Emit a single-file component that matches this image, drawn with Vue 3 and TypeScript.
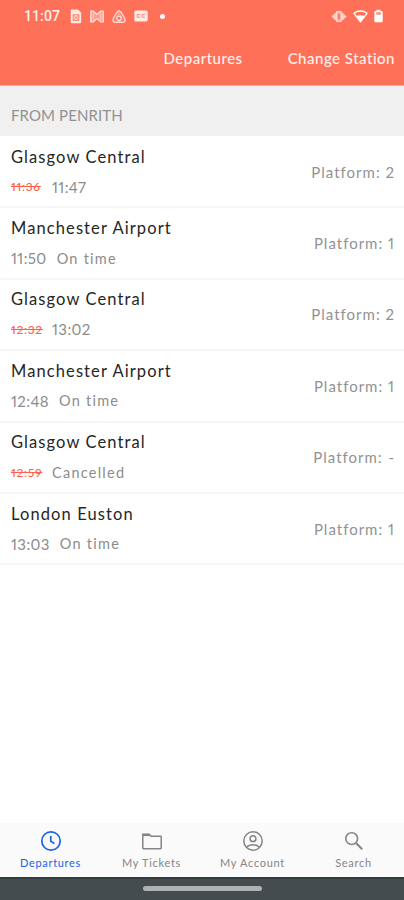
<script setup lang="ts">
interface Departure {
  id: number
  destination: string
  scheduled: string
  status: string
  delayed: boolean
  platform: string
}

const departures: Departure[] = [
  { id: 1, destination: 'Glasgow Central', scheduled: '11:36', status: '11:47', delayed: true, platform: '2' },
  { id: 2, destination: 'Manchester Airport', scheduled: '11:50', status: 'On time', delayed: false, platform: '1' },
  { id: 3, destination: 'Glasgow Central', scheduled: '12:32', status: '13:02', delayed: true, platform: '2' },
  { id: 4, destination: 'Manchester Airport', scheduled: '12:48', status: 'On time', delayed: false, platform: '1' },
  { id: 5, destination: 'Glasgow Central', scheduled: '12:59', status: 'Cancelled', delayed: true, platform: '-' },
  { id: 6, destination: 'London Euston', scheduled: '13:03', status: 'On time', delayed: false, platform: '1' },
]

const tabs = [
  { icon: 'clock', label: 'Departures', active: true },
  { icon: 'folder', label: 'My Tickets', active: false },
  { icon: 'account', label: 'My Account', active: false },
  { icon: 'search', label: 'Search', active: false },
]
</script>

<template>
  <div class="screen">
    <header class="top">
      <div class="status">
        <span class="device-time">11:07</span>
        <svg width="12" height="15" viewBox="0 0 12 15">
          <path d="M1.500 .5H8L11.200 3.700V13a1.200 1.200 0 0 1-1.200 1.200H2A1.200 1.200 0 0 1 .8 13V1.200Z" fill="#ffe9e4" />
          <path d="M3.200 5.800h5.600v5.600H3.200ZM3.400 6l5.200 5.200M8.600 6l-5.200 5.200" fill="none" stroke="#ff7059" stroke-width=".9" />
        </svg>
        <svg class="next" width="14" height="13" viewBox="0 0 14 13">
          <path d="M.8 1h2.200L7 4.400 11 1h2.200v11H11L7 8.600 3 12H.8Z" fill="#ff9f8f" stroke="#ffe9e4" stroke-width="1.200" stroke-linejoin="round" />
          <path d="M3.300 3v7M10.700 3v7" fill="none" stroke="#ffd6cd" stroke-width=".8" />
        </svg>
        <svg class="next" width="14" height="13" viewBox="0 0 14 13">
          <path d="M7 1C9 1 13.200 8.800 13 10.400c-.2 1.700-1.300 1.800-2.500 1.800h-7C2.300 12.200 1.200 12.100 1 10.400 .8 8.800 5 1 7 1Z" fill="none" stroke="#ffe0d9" stroke-width="1.400" />
          <circle cx="7" cy="8.300" r="2.200" fill="none" stroke="#ffe0d9" stroke-width="1.300" />
          <path d="M7 2.800 3.500 9.500M7 2.800l3.500 6.700" stroke="#ffd0c6" stroke-width=".8" />
        </svg>
        <svg class="next" width="14" height="12" viewBox="0 0 14 12">
          <rect x=".3" y=".6" width="13.400" height="10.800" rx="1.500" fill="#ffeae6" />
          <path d="M6.200 4.600H3.200v2.600h3M11 4.600H8v2.600h3" fill="none" stroke="#ff8d7a" stroke-width="1" />
        </svg>
        <i class="dot"></i>
        <div class="right-icons">
          <svg width="16" height="13" viewBox="0 0 16 13">
            <path d="M4.500 3 1 6.500 4.500 10ZM11.500 3 15 6.500 11.500 10Z" fill="#ffd3ca" stroke="#ffd3ca" />
            <rect x="5.400" y="1.500" width="5.200" height="10" rx="1" fill="#ffb5a8" stroke="#ffd9d1" stroke-width="1.200" />
            <path d="M8 4v5" stroke="#ff7059" stroke-width="1.700" />
          </svg>
          <svg width="15" height="13" viewBox="0 0 15 13">
            <path d="M1 3.300C4.500 .2 10.500 .2 14 3.300L7.500 11.800Z" fill="none" stroke="#fff" stroke-width="1.300" stroke-linejoin="round" />
            <path d="M3.200 5.900C5.500 4.900 9.500 4.900 11.800 5.900L7.500 11.800Z" fill="#fff" />
          </svg>
          <svg width="9" height="14" viewBox="0 0 9 14">
            <path d="M2.500 2V.7h4V2h1.200c.6 0 1 .4 1 1v9c0 .7-.4 1.200-1 1.200H1.300c-.6 0-1-.5-1-1.200V3c0-.6.4-1 1-1Z" fill="#fff" />
            <path d="M2.200 3.300h4.600v2.400H2.200Z" fill="#ff8c78" />
          </svg>
        </div>
      </div>
      <nav class="actions">
        <span>Departures</span>
        <span>Change Station</span>
      </nav>
    </header>

    <h2 class="section"><span>FROM PENRITH</span></h2>

    <ul class="list">
      <li v-for="d in departures" :key="d.id" class="row">
        <div class="info">
          <div class="dest">{{ d.destination }}</div>
          <div class="times">
            <span :class="d.delayed ? 'old' : 'time'">{{ d.scheduled }}</span>
            <span :class="/\d/.test(d.status) ? 'time' : 'state'">{{ d.status }}</span>
          </div>
        </div>
        <div class="platform" :class="{ unknown: d.platform === '-' }">Platform: {{ d.platform }}</div>
      </li>
    </ul>

    <nav class="tabs">
      <div v-for="t in tabs" :key="t.label" class="tab" :class="{ active: t.active }">
        <svg width="22" height="22" viewBox="0 0 22 22" fill="none" stroke="currentColor" stroke-width="1.700">
          <template v-if="t.icon === 'clock'">
            <circle cx="11" cy="11" r="9.200" />
            <path d="M10.800 6v5.300l3.700 2.300" />
          </template>
          <template v-else-if="t.icon === 'folder'">
            <path d="M1.800 18V4.300h6.400l2 2h9.400c.4 0 .6.200.6.600V18c0 .5-.2.700-.7.700H2.500c-.5 0-.7-.2-.7-.7Z" stroke-width="1.500" />
            <path d="M1.800 5h7" stroke-width="2.200" />
          </template>
          <template v-else-if="t.icon === 'account'">
            <circle cx="11" cy="11" r="9.200" stroke-width="1.500" />
            <circle cx="11" cy="8.700" r="2.900" stroke-width="1.500" />
            <path d="M4.800 17.200c2.400-3.200 10-3.200 12.400 0" stroke-width="1.500" />
          </template>
          <template v-else>
            <circle cx="8.700" cy="8.600" r="5.900" stroke-width="1.600" />
            <path d="m13 13 6.200 6.200" stroke-width="2.100" />
          </template>
        </svg>
        <span>{{ t.label }}</span>
      </div>
    </nav>
    <div class="gesture"><i></i></div>
  </div>
</template>

<style>
body {
  background: #fff;
}
</style>

<style scoped>
.screen {
  display: flex;
  flex-direction: column;
  width: 404px;
  height: 900px;
  overflow: hidden;
  background: #fff;
  font-family: Lato, "Liberation Sans", sans-serif;
  font-variant-numeric: proportional-nums;
  white-space: nowrap;
}

.top {
  flex: none;
  height: 86px;
  box-sizing: border-box;
  background: #ff7059;
  border-bottom: 1px solid #ffa393;
  color: #fff1ee;
}

.status {
  display: flex;
  align-items: center;
  height: 32px;
  padding: 0 21px 0 24px;
}

.device-time {
  width: 46px;
  font: 500 14px/20px Roboto, sans-serif;
  letter-spacing: 0.1px;
}

.next {
  margin-left: 8px;
}

.dot {
  width: 5px;
  height: 5px;
  margin-left: 12px;
  border-radius: 50%;
  background: #fff;
}

.right-icons {
  display: flex;
  align-items: center;
  gap: 6px;
  margin-left: auto;
}

.actions {
  display: flex;
  justify-content: flex-end;
  gap: 45px;
  height: 53px;
  padding-right: 9px;
  font-size: 15px;
  font-weight: 500;
  line-height: 53px;
  letter-spacing: 0.5px;
}

.section {
  display: flex;
  flex: none;
  align-items: center;
  height: 50px;
  margin: 0;
  padding: 8px 11px 0;
  box-sizing: border-box;
  background: #f0f0f0;
  color: #929292;
  font-size: 15px;
  font-weight: 400;
  letter-spacing: 0.1px;
}

.list {
  margin: 0;
  padding: 1px 0 0;
  list-style: none;
}

.row {
  display: flex;
  align-items: center;
  justify-content: space-between;
  height: 71.4px;
  padding: 0 9px 0 11px;
  box-sizing: border-box;
  border-bottom: 2px solid #f6f6f6;
}

.dest {
  color: #262626;
  font-size: 16.5px;
  line-height: 24px;
  letter-spacing: 1.1px;
}

.times {
  display: flex;
  align-items: center;
  height: 24px;
  margin-top: 6px;
  color: #8c8c8c;
  font-size: 15px;
}

.time {
  margin-right: 10px;
  letter-spacing: 0.4px;
}

.state {
  font-size: 14.5px;
  letter-spacing: 1.25px;
}

.old {
  width: 31px;
  margin-right: 10px;
  color: #ff604a;
  font-size: 12px;
  font-weight: 500;
  letter-spacing: 0.7px;
  text-decoration: line-through;
}

.platform {
  color: #929292;
  font-size: 15px;
  letter-spacing: 1px;
}

.unknown {
  word-spacing: 1px;
}

.tabs {
  display: grid;
  grid-template-columns: repeat(4, 101px);
  flex: none;
  height: 54px;
  margin-top: auto;
  background: #fafafa;
}

.tab {
  display: flex;
  flex-direction: column;
  align-items: center;
  padding-top: 7px;
  color: #858585;
  font-size: 11px;
  line-height: 14px;
  letter-spacing: 0.7px;
}

.tab span {
  margin-top: 4px;
}

.active {
  color: #1765e5;
}

.gesture {
  display: flex;
  flex: none;
  align-items: center;
  justify-content: center;
  height: 23px;
  box-sizing: border-box;
  border-top: 2px solid #343e41;
  padding-bottom: 2px;
  background: #444c50;
}

.gesture i {
  width: 119px;
  height: 5px;
  border-radius: 3px;
  background: #acb2b4;
}
</style>
